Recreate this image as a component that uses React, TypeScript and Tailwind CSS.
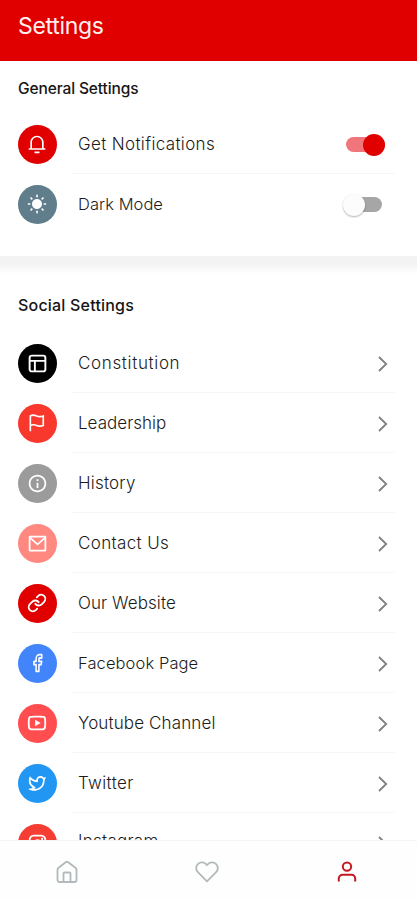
import { useState } from "react";
import type { ReactNode } from "react";
import { Facebook, Link } from "lucide-react";
import {
  RiNotification3Line,
  RiSunFill,
  RiInformationLine,
  RiMailLine,
  RiYoutubeLine,
  RiTwitterLine,
  RiInstagramLine,
} from "react-icons/ri";

type LinkItem = {
  label: string;
  color: string;
  text: string;
  icon: ReactNode;
};

// ---------- icons ----------
function LayoutIcon() {
  return (
    <svg width="21" height="21" viewBox="0 0 24 24" fill="none" stroke="currentColor" strokeWidth="2.2">
      <rect x="3" y="3" width="18" height="18" rx="2.5" />
      <path d="M3 9h18M9 9v12" />
    </svg>
  );
}

function FlagIcon() {
  return (
    <svg width="20" height="20" viewBox="0 0 24 24" fill="none" stroke="currentColor" strokeWidth="2">
      <path d="M4 22V3.5c3-1.6 5.4-.9 7.5 0s4.7 1.3 8 0V15c-3.300 1.300-5.900.9-8 0s-4.500-1.500-7.500 0" />
    </svg>
  );
}

function HomeIcon() {
  return (
    <svg width="24" height="24" viewBox="0 0 24 24" fill="none" stroke="currentColor" strokeWidth="1.8" strokeLinejoin="round">
      <path d="M2.500 9.700c0-.7.3-1.300.8-1.700l7.400-5.700a2 2 0 0 1 2.500 0L20.700 8c.5.4.8 1 .8 1.700V20a2 2 0 0 1-2 2h-15a2 2 0 0 1-2-2z" />
      <path d="M8.500 22v-8.500a1 1 0 0 1 1-1h5a1 1 0 0 1 1 1V22" />
    </svg>
  );
}

function HeartIcon() {
  return (
    <svg width="24" height="24" viewBox="0 0 24 24" fill="none" stroke="currentColor" strokeWidth="1.8" strokeLinejoin="round">
      <path d="M12 21.300L2.900 12.200a5.700 5.700 0 0 1 0-8.100 5.800 5.800 0 0 1 8.100 0l1 1 1-1a5.800 5.800 0 0 1 8.100 0 5.700 5.700 0 0 1 0 8.100z" />
    </svg>
  );
}

function UserIcon() {
  return (
    <svg width="24" height="24" viewBox="0 0 24 24" fill="none" stroke="currentColor" strokeWidth="2">
      <circle cx="12" cy="6.600" r="4.200" />
      <path d="M3.800 21.500v-3a3.700 3.700 0 0 1 3.700-3.700h9a3.700 3.700 0 0 1 3.700 3.700v3" />
    </svg>
  );
}

function ChevronIcon() {
  return (
    <svg width="10" height="16" viewBox="0 0 10 16" fill="none" stroke="#808080" strokeWidth="1.800">
      <path d="M1 1l7.200 7L1 15" />
    </svg>
  );
}

const links: LinkItem[] = [
  { label: "Constitution", color: "bg-black", text: "text-[17px] tracking-[0.65px]", icon: <LayoutIcon /> },
  { label: "Leadership", color: "bg-[#f9382d]", text: "text-[17px] tracking-[0.02px]", icon: <FlagIcon /> },
  { label: "History", color: "bg-[#9b9b9b]", text: "text-[17px] tracking-[0.2px]", icon: <RiInformationLine size={21} /> },
  { label: "Contact Us", color: "bg-[#ff8980]", text: "text-[17px] tracking-[0.35px]", icon: <RiMailLine size={21} /> },
  { label: "Our Website", color: "bg-[#e00000]", text: "text-[17px] tracking-[0.08px]", icon: <Link size={20} strokeWidth={2.2} /> },
  {
    label: "Facebook Page",
    color: "bg-[#4285fb]",
    text: "text-[16.5px] tracking-[0.1px]",
    icon: <Facebook className="ml-[1px] h-[20px] w-[17px]" preserveAspectRatio="none" strokeWidth={2.2} />,
  },
  { label: "Youtube Channel", color: "bg-[#ff4d50]", text: "text-[17px] tracking-[0.13px]", icon: <RiYoutubeLine size={22} /> },
  { label: "Twitter", color: "bg-[#2196f3]", text: "text-[17px] tracking-[0.35px]", icon: <RiTwitterLine size={21} /> },
  { label: "Instagram", color: "bg-[#f53d33]", text: "pb-[3px] text-[17px] tracking-[0.25px]", icon: <RiInstagramLine size={21} /> },
];

// ---------- rows ----------
function Row({
  icon,
  color,
  label,
  text,
  divider = true,
  children,
}: LinkItem & { divider?: boolean; children: ReactNode }) {
  return (
    <div className="flex h-[60px] items-center pl-[18px]">
      <div className={`flex size-[39px] shrink-0 items-center justify-center rounded-full pr-px text-white ${color}`}>
        {icon}
      </div>
      <div
        className={`ml-[15px] mr-[22px] flex h-full flex-1 items-center justify-between border-b pl-[6px] pt-[2px] ${
          divider ? "border-[#f6f6f6]" : "border-transparent"
        }`}
      >
        <span className={`whitespace-nowrap font-light text-[#1c1c1c] ${text}`}>{label}</span>
        {children}
      </div>
    </div>
  );
}

function Toggle({ on, onChange }: { on: boolean; onChange: () => void }) {
  return (
    <button type="button" onClick={onChange} className="flex h-[22px] w-[42px] items-center justify-center">
      <span
        className={`flex h-[15px] items-center rounded-full ${
          on ? "w-[39px] justify-end bg-[#f1767b]" : "w-[36px] justify-start bg-[#a6a6a6]"
        }`}
      >
        <span
          className={`size-[22px] shrink-0 rounded-full ${
            on ? "bg-[#e00000]" : "-ml-[3px] bg-[#fcfcfc] shadow-[0_1px_2px_rgba(0,0,0,0.3)]"
          }`}
        />
      </span>
    </button>
  );
}

export default function App() {
  const [notifications, setNotifications] = useState(true);
  const [dark, setDark] = useState(false);

  return (
    <div className="flex h-[900px] w-full flex-col overflow-hidden bg-white font-['Inter','Roboto',sans-serif]">
      <header className="h-[61px] shrink-0 bg-[#e00000] pl-[18px] pt-[9px]">
        <h1 className="text-[23px] leading-[34px] tracking-[-0.3px] text-[#fff0ee]">Settings</h1>
      </header>

      <main className="flex-1 overflow-hidden">
        <section className="h-[195px]">
          <h2 className="h-[53px] pl-[18px] pt-[17px] text-[15.5px] font-medium leading-[22px] tracking-[-0.12px] text-[#151515]">
            General Settings
          </h2>
          <Row
            label="Get Notifications"
            color="bg-[#e00000]"
            text="text-[17px] tracking-[0.35px]"
            icon={<RiNotification3Line size={20} />}
          >
            <div className="mr-[9px]">
              <Toggle on={notifications} onChange={() => setNotifications(!notifications)} />
            </div>
          </Row>
          <Row
            label="Dark Mode"
            color="bg-[#607d8b]"
            text="text-[16.5px] tracking-[0.05px]"
            divider={false}
            icon={<RiSunFill size={20} />}
          >
            <div className="mr-[10px]">
              <Toggle on={dark} onChange={() => setDark(!dark)} />
            </div>
          </Row>
        </section>

        <div className="h-[18px] bg-gradient-to-b from-[#f3f3f3] from-40% to-white" />

        <section>
          <h2 className="h-[59px] pl-[18px] pt-[20px] text-[16px] font-medium leading-[22px] tracking-[0.2px] text-[#151515]">
            Social Settings
          </h2>
          {links.map((item) => (
            <Row key={item.label} {...item}>
              <div className="mr-[7px]">
                <ChevronIcon />
              </div>
            </Row>
          ))}
        </section>
      </main>

      <nav className="grid h-[60px] shrink-0 grid-cols-3 border-t border-[#f5f5f5] bg-[#fefefe] pt-[19px] text-[#b2b9bb]">
        <div className="flex justify-center pr-[6px]">
          <HomeIcon />
        </div>
        <div className="flex justify-center pr-[3px]">
          <HeartIcon />
        </div>
        <div className="flex justify-center pr-[2px] text-[#c61820]">
          <UserIcon />
        </div>
      </nav>
    </div>
  );
}
